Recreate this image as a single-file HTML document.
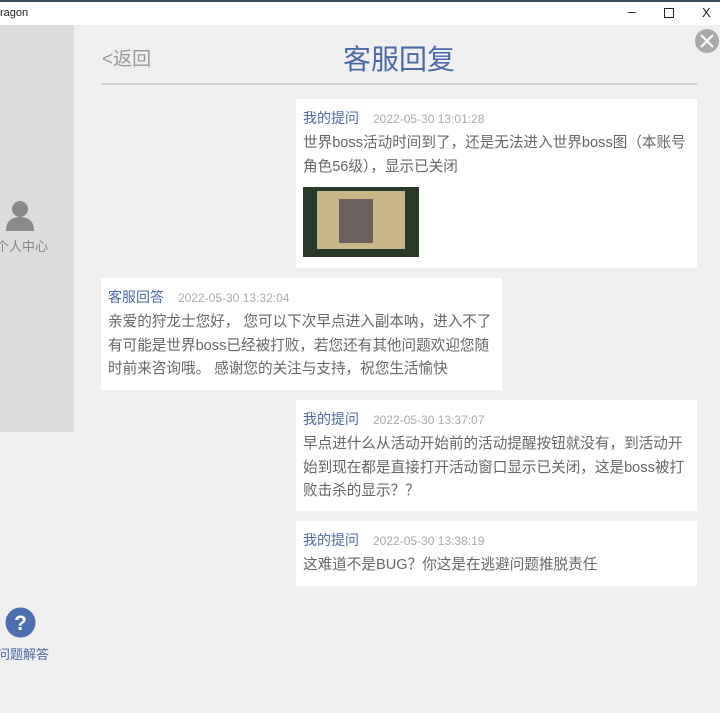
<!DOCTYPE html>
<html><head><meta charset="utf-8"><style>
body{margin:0;width:720px;height:713px;overflow:hidden;background:#efefef;font-family:"Liberation Sans","Noto Sans CJK SC",sans-serif;position:relative}
.tb{position:absolute;left:0;top:0;width:720px;height:25px;background:#fff;border-top:2px solid #3c4a58;box-sizing:border-box;font-size:11px;color:#222}
.side{position:absolute;left:0;top:25px;width:74px;height:407px;background:#dcdcdc}
.b{position:absolute;background:#fff;box-sizing:border-box;padding:9px 7px 0 7px}
.h{font-size:14px;color:#4a6aa8;line-height:20px;height:22px}
.h span{font-size:12px;color:#aaa;margin-left:14px}
.t{font-size:14.6px;color:#666;line-height:23.5px;white-space:nowrap;margin-top:2px}
</style></head><body>
<div class="tb"><span style="position:absolute;left:0;top:5px">ragon</span>
<span style="position:absolute;left:628px;top:1px;font-size:14px">–</span>
<span style="position:absolute;left:664px;top:6px;width:8px;height:8px;border:1px solid #222"></span>
<span style="position:absolute;left:702px;top:3px;font-size:13px">X</span></div>
<div class="side"></div>
<svg style="position:absolute;left:5px;top:200px" width="30" height="32"><circle cx="15" cy="9" r="8" fill="#8a8a8a"/><path d="M1 31 Q1 17 15 17 Q29 17 29 31Z" fill="#8a8a8a"/></svg>
<div style="position:absolute;left:-4px;top:236px;font-size:13px;color:#888">个人中心</div>
<svg style="position:absolute;left:5px;top:607px" width="31" height="31"><circle cx="15.5" cy="15.5" r="15" fill="#4a6eb0"/><text x="15.5" y="23" text-anchor="middle" font-size="21" font-weight="bold" fill="#fff" font-family="Liberation Sans">?</text></svg>
<div style="position:absolute;left:-3px;top:644px;font-size:13px;color:#4a6aa8">问题解答</div>
<div style="position:absolute;left:102px;top:44px;font-size:19px;color:#999">&lt;返回</div>
<div style="position:absolute;left:343px;top:38px;font-size:28px;color:#4a6aa8">客服回复</div>
<svg style="position:absolute;left:695px;top:29px" width="24" height="24"><circle cx="12" cy="12" r="12" fill="#aaa"/><path d="M6 6L18 18M18 6L6 18" stroke="#fff" stroke-width="2"/></svg>
<div style="position:absolute;left:101px;top:83px;width:596px;height:2px;background:#d0d0d0"></div>
<div class="b" style="left:296px;top:99px;width:401px;height:169px">
<div class="h">我的提问<span>2022-05-30 13:01:28</span></div>
<div class="t">世界boss活动时间到了，还是无法进入世界boss图（本账号<br>角色56级），显示已关闭</div>
<div style="margin-top:8px;width:116px;height:70px;background:#2a3a28;position:relative"><div style="position:absolute;left:14px;top:4px;width:88px;height:58px;background:#c8b888"></div><div style="position:absolute;left:36px;top:12px;width:34px;height:44px;background:#6a6060"></div></div>
</div>
<div class="b" style="left:101px;top:278px;width:401px;height:112px">
<div class="h">客服回答<span>2022-05-30 13:32:04</span></div>
<div class="t">亲爱的狩龙士您好， 您可以下次早点进入副本呐，进入不了<br>有可能是世界boss已经被打败，若您还有其他问题欢迎您随<br>时前来咨询哦。 感谢您的关注与支持，祝您生活愉快</div>
</div>
<div class="b" style="left:296px;top:400px;width:401px;height:111px">
<div class="h">我的提问<span>2022-05-30 13:37:07</span></div>
<div class="t">早点进什么从活动开始前的活动提醒按钮就没有，到活动开<br>始到现在都是直接打开活动窗口显示已关闭，这是boss被打<br>败击杀的显示？？</div>
</div>
<div class="b" style="left:296px;top:521px;width:401px;height:65px">
<div class="h">我的提问<span>2022-05-30 13:38:19</span></div>
<div class="t">这难道不是BUG？你这是在逃避问题推脱责任</div>
</div>
</body></html>
